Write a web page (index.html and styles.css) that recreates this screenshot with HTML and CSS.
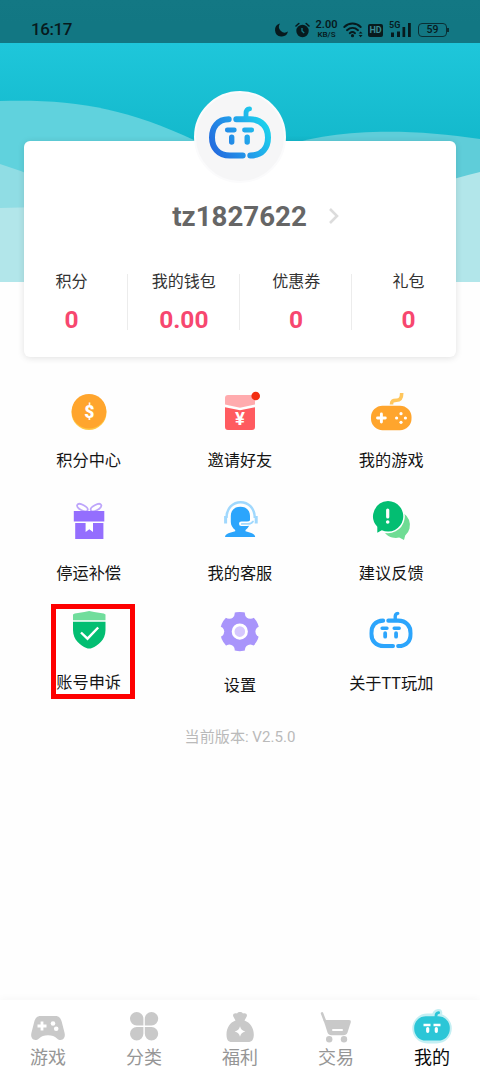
FILE: index.html
```html
<!DOCTYPE html>
<html lang="zh-CN">
<head>
<meta charset="utf-8">
<meta name="viewport" content="width=device-width, initial-scale=1">
<title>我的</title>
<link rel="stylesheet" href="styles.css">
</head>
<body>
<svg class="defs" width="0" height="0">
  <defs>
    <linearGradient id="brand" x1="0" y1="50" x2="62" y2="14" gradientUnits="userSpaceOnUse">
      <stop offset="0" stop-color="#2462dc"/><stop offset=".5" stop-color="#229aea"/><stop offset="1" stop-color="#1bdcec"/>
    </linearGradient>
    <symbol id="logo" viewBox="0 0 62 53">
      <g fill="none" stroke-linecap="round">
        <path stroke-width="6" d="M19.7 13.3C8.5 13.3 3 21.5 3 31.4S9 49.5 21 49.5H33.7M27.3 13.3H41C53 13.3 59 21.5 59 31.4S53.5 49.5 41.3 49.5"/>
        <path stroke-width="4.8" d="M37 12V7.5Q37 3.2 40.6 2.9M18.3 24H25.3M35.5 24H42.7"/>
        <path stroke-width="5.4" d="M22.7 31.2V36M38.2 31.2V36"/>
      </g>
    </symbol>
  </defs>
</svg>
<div class="screen">
  <svg class="waves" width="480" height="282" viewBox="0 0 480 282">
    <defs><linearGradient id="sea" x1="0" y1="0" x2="0" y2="1"><stop offset="0" stop-color="#20c8dc"/><stop offset=".16" stop-color="#1ec6da"/><stop offset=".5" stop-color="#14b9cc"/></linearGradient></defs>
    <path fill="url(#sea)" d="M0 0H480V282H0z"/>
    <path fill="#60d2dd" d="M0 101C75 99 125 108 194 140L300 200V282H0z"/>
    <path fill="#5fcdd9" d="M280 148C330 128 410 128 480 139V282H280z"/>
    <path fill="#90dde4" d="M0 164Q40 176 80 200V282H0z"/>
    <path fill="#b2e6ea" d="M0 208L40 207V282H0zM400 200Q430 184 480 172V282H400z"/>
  </svg>

  <header class="status">
    <span class="time">16:17</span>
    <div class="indicators">
      <svg class="moon" width="15" height="16" viewBox="0 0 15 16"><path fill="#071a1d" d="M6 1.5A6.6 6.6 0 1 0 14 9.6 5.8 5.8 0 0 1 6 1.5z"/></svg>
      <svg width="15" height="16" viewBox="0 0 15 16"><circle cx="7.5" cy="9" r="6.2" fill="#071a1d"/><path fill="none" stroke="#071a1d" stroke-width="1.6" stroke-linecap="round" d="M1 4L3.8 1.5M14 4L11.2 1.5"/><path fill="none" stroke="#117782" stroke-width="1.4" d="M7 6V9L9.2 11"/></svg>
      <div class="speed"><span>2.00</span><small>KB/S</small></div>
      <svg width="20" height="16" viewBox="0 0 20 16"><g fill="none" stroke="#071a1d" stroke-width="1.9" stroke-linecap="round"><path d="M1.3 5C6 .4 13 .4 17.7 5M4 8.2C7.3 5.2 11.7 5.2 15 8.2M6.8 11.2Q9.5 9 12 11.2"/></g><circle cx="9.5" cy="13.7" r="1.6" fill="#071a1d"/><path fill="#071a1d" d="M15.6 11.6L17.6 9.4 19.6 11.6zM15.6 13.1H19.6L17.6 15.3z"/></svg>
      <span class="hd">HD</span>
      <div class="signal"><small>5G</small><svg width="21" height="16" viewBox="0 0 21 16"><path fill="#071a1d" d="M1 10.5H4V15H1zM7 9.5H10V15H7zM12.5 5H15.2V15H12.5zM18 1H20.8V15H18z"/></svg></div>
      <span class="battery">59</span>
    </div>
  </header>

  <section class="profile">
    <div class="avatar"><svg width="62" height="53" stroke="url(#brand)"><use href="#logo"/></svg></div>
    <div class="name"><span>tz1827622</span><svg width="12" height="18" viewBox="0 0 12 18"><path d="M2 2L9 9 2 16" fill="none" stroke="#dcdcdc" stroke-width="2.6"/></svg></div>
    <div class="stats">
      <div class="stat"><span>积分</span><b>0</b></div>
      <div class="stat"><span>我的钱包</span><b>0.00</b></div>
      <div class="stat"><span>优惠券</span><b>0</b></div>
      <div class="stat"><span>礼包</span><b>0</b></div>
    </div>
  </section>

  <main class="menu">
    <div class="item">
      <svg class="icon" viewBox="0 0 56 56"><circle cx="28" cy="28.5" r="17.5" fill="#ffc844"/><circle cx="28" cy="27.3" r="17.3" fill="#ffa52d"/><text class="symbol" x="28.3" y="33.8" font-size="17.5">$</text></svg>
      <span>积分中心</span>
    </div>
    <div class="item">
      <svg class="icon" viewBox="0 0 56 56"><path fill="#ffabae" d="M13 20.5V14Q13 11 16 11H40Q43 11 43 14V20.5L28 23.8z"/><path fill="#ff5b60" d="M13 23.2L28 26.2 43 23.2V43Q43 46 40 46H16Q13 46 13 43z"/><text class="symbol yen" x="28" y="41" font-size="18.5">¥</text><circle cx="43.7" cy="12" r="4.3" fill="#f32c10"/></svg>
      <span>邀请好友</span>
    </div>
    <div class="item">
      <svg class="icon" viewBox="0 0 56 56"><path fill="none" stroke="#ffc65c" stroke-width="3.6" d="M28.5 20.5C28.5 16.5 30 16.3 33.5 16.3S38.7 14.5 38.7 9"/><rect x="8" y="21.7" width="40.5" height="24.5" rx="11.5" fill="#ffa52d"/><path stroke="#fff" stroke-width="2.9" stroke-linecap="round" d="M14.5 34H22.3M18.4 30V38"/><g fill="#fff"><circle cx="33.6" cy="34" r="1.6"/><circle cx="42.4" cy="34" r="1.6"/><circle cx="38" cy="29.7" r="1.6"/><circle cx="38" cy="38.3" r="1.6"/></g></svg>
      <span>我的游戏</span>
    </div>
    <div class="item gap-a">
      <svg class="icon" viewBox="0 0 56 56"><g fill="none" stroke="#bda5fb" stroke-width="1.8"><ellipse cx="21.4" cy="14.6" rx="5.8" ry="2.7" transform="rotate(-28 21.4 14.6) rotate(56 21.4 14.6)"/><ellipse cx="35" cy="14.6" rx="5.8" ry="2.7" transform="rotate(-28 35 14.6)"/></g><path fill="#946efe" d="M12.8 18H43.3V28.6H12.8zM14.2 30H42.4V46H14.2z"/><path fill="#fff" d="M24.6 29.5H32V39L28.3 36.3 24.6 39z"/></svg>
      <span>停运补偿</span>
    </div>
    <div class="item gap-a">
      <svg class="icon" viewBox="0 0 56 56"><path fill="none" stroke="#a0d8fd" stroke-width="2.5" d="M14.5 25C14.5 4 42.8 4 42.8 25"/><path fill="none" stroke="#a0d8fd" stroke-width="3" d="M13.6 23V30.5M44.2 23V30.5"/><path fill="#2ca5fc" d="M28.4 13.7C34.5 13.7 38 17.5 38 23V29C38 32.5 36 35 33.5 37V38.2C38 39.8 43 40 43.2 44H13C13.3 40 18.5 39.8 23.2 38.2V37C20.8 35 18.8 32.5 18.8 29V23C18.8 17.5 22.3 13.7 28.4 13.7z"/><path fill="none" stroke="#fff" stroke-width="4.6" stroke-linecap="round" d="M29.3 30.7H35Q38.5 30.7 40 28.5"/><path fill="none" stroke="#a0d8fd" stroke-width="1.8" stroke-linecap="round" d="M29.8 30.9H36Q39.5 30.9 41 28.5"/></svg>
      <span>我的客服</span>
    </div>
    <div class="item gap-a">
      <svg class="icon" viewBox="0 0 56 56"><path fill="#6fdc94" d="M33 18A14 14 0 0 1 42.2 42.5L41 47 36.2 44.6C30 46 24 43.5 20.5 38z"/><path fill="#03be72" stroke="#fff" stroke-width="3" paint-order="stroke" d="M25 8A15.3 15.3 0 1 1 18.8 37.3L14.3 39.8V33.8A15.3 15.3 0 0 1 25 8z"/><path stroke="#fff" stroke-width="3.2" stroke-linecap="round" d="M24.7 17V24"/><circle cx="24.7" cy="29" r="1.8" fill="#fff"/></svg>
      <span>建议反馈</span>
    </div>
    <div class="item gap-b marked">
      <svg class="icon" viewBox="0 0 56 56"><path fill="#70dd9c" d="M12 10.5Q13 9.4 17 9 24 8 28.2 7 32.5 8 39.5 9 43.5 9.4 44.5 10.5V16.3H12z"/><path fill="#03be72" d="M12 17.8H44.5V26C44.5 36 37 41.5 31 44Q28.2 45.2 25.4 44C19.5 41.5 12 36 12 26z"/><path fill="none" stroke="#fff" stroke-width="2.4" d="M20 28.5L26.5 34.7 37.2 23.5"/></svg>
      <span>账号申诉</span>
    </div>
    <div class="item gap-b low-a">
      <svg class="icon" viewBox="0 0 56 56"><circle cx="27.8" cy="27.6" r="19.6" fill="#a995fb"/><g fill="#fefefe"><circle cx="48.8" cy="27.6" r="5.4"/><circle cx="38.3" cy="9.4" r="5.4"/><circle cx="17.3" cy="9.4" r="5.4"/><circle cx="6.8" cy="27.6" r="5.4"/><circle cx="17.3" cy="45.8" r="5.4"/><circle cx="38.3" cy="45.8" r="5.4"/></g><circle cx="27.8" cy="27.6" r="6.7" fill="#d6c8fe" stroke="#fff" stroke-width="2.8"/></svg>
      <span>设置</span>
    </div>
    <div class="item gap-b low-b">
      <svg class="icon" viewBox="0 0 56 56"><svg x="6.2" y="7.3" width="43.6" height="37.3" stroke="#2ca5fc"><use href="#logo"/></svg></svg>
      <span>关于TT玩加</span>
    </div>
  </main>
  <p class="version">当前版本: V2.5.0</p>

  <nav class="tabs">
    <div class="tab"><svg viewBox="0 0 40 34"><path fill="#c9c9c9" d="M13 6H27C31 6 32.7 8 33.8 12L36.6 23C38 29 33 32 29 28.5 26.5 26 24 25.3 20 25.3S13.5 26 11 28.5C7 32 2 29 3.4 23L6.2 12C7.3 8 9 6 13 6z"/><path stroke="#fff" stroke-width="2.8" d="M9.5 16H18.5M14 11.5V20.5"/><g fill="#fff"><circle cx="25" cy="13.5" r="2.3"/><circle cx="28.2" cy="18.8" r="2.3"/></g></svg><span>游戏</span></div>
    <div class="tab"><svg viewBox="0 0 40 34"><path fill="#c9c9c9" d="M19.4 15.5H12.7A6.7 6.7 0 1 1 19.4 8.8zM20.8 15.5V8.8A6.7 6.7 0 1 1 27.5 15.5zM19.4 17V23.7A6.7 6.7 0 1 1 12.7 17zM20.8 17H27.5A6.7 6.7 0 1 1 20.8 23.7z"/></svg><span>分类</span></div>
    <div class="tab"><svg viewBox="0 0 40 34"><path fill="#c9c9c9" d="M15.5 10.5L13.3 6.5C12.2 3.8 14.8 2.5 17 3.5 18.5 1.6 21.5 1.6 23 3.5 25.2 2.5 27.8 3.8 26.7 6.5L24.5 10.5C30 12.5 33.8 18 33.8 24.5 33.8 29.5 32 32 28 32H12C8 32 6.5 29.5 6.5 24.5 6.5 18 10 12.5 15.5 10.5z"/><path fill="#fff" d="M20 16.3Q21 20.5 25.3 21.5 21 22.5 20 26.7 19 22.5 14.7 21.5 19 20.5 20 16.3z"/></svg><span>福利</span></div>
    <div class="tab"><svg viewBox="0 0 40 34"><path fill="none" stroke="#c9c9c9" stroke-width="2.5" stroke-linecap="round" d="M6 3.3L9 11"/><path fill="#c9c9c9" d="M7.5 10H33Q35.3 10 34.7 12.4L31.5 22.5Q30.5 25.3 27.5 25.3H15.5Q12.5 25.3 11.5 22.5z"/><path stroke="#fff" stroke-width="2" stroke-linecap="round" d="M17 20H26"/><g fill="#c9c9c9"><circle cx="13.2" cy="29.3" r="3.2"/><circle cx="28" cy="29.3" r="3.2"/></g></svg><span>交易</span></div>
    <div class="tab active"><svg viewBox="0 0 40 34"><g fill="none" stroke="#c4eff3" stroke-linecap="round"><path stroke-width="7.5" d="M24 7Q23.5 3.2 26.5 2.7"/><rect x="3.3" y="6.5" width="33.5" height="24" rx="12" stroke-width="6"/></g><rect x="2.2" y="6.3" width="35.6" height="24.3" rx="11.5" fill="#2bc6d7"/><path fill="none" stroke="#2bc6d7" stroke-width="2.8" stroke-linecap="round" d="M24 8V6Q24 3 26.6 2.7"/><path stroke="#fff" stroke-width="2.6" d="M11.5 15H18.5M21.5 15H28.5"/><path stroke="#fff" stroke-width="3.2" stroke-linecap="round" d="M15.7 18.5V21.3M24.3 18.5V21.3"/></svg><span>我的</span></div>
  </nav>
</div>
</body>
</html>
```
FILE: styles.css
```css
*, *::before, *::after { box-sizing: border-box; }
body { margin: 0; background: #fefefe; font-family: Roboto, "Noto Sans CJK SC", sans-serif; color: #141414; }
.defs { position: absolute; }
.screen { position: relative; display: flex; flex-direction: column; width: 480px; height: 1073px; overflow: hidden; }
.waves { position: absolute; top: 0; left: 0; }
.status { position: relative; display: flex; justify-content: space-between; height: 43px; padding: 15px 33px 0 31px; background: rgba(0, 0, 0, .4); color: #071a1d; }
.time { font-size: 17px; font-weight: 500; line-height: 29px; letter-spacing: -.4px; }
.indicators { display: flex; align-items: center; height: 29px; gap: 5px; }
.moon { margin-right: 1px; }
.speed { display: flex; flex-direction: column; align-items: center; width: 23px; font-weight: 600; }
.speed span { font-size: 11px; line-height: 10px; }
.speed small { font-size: 8px; line-height: 10px; }
.hd { width: 15px; height: 13px; margin: 1px 2px 0 0; border-radius: 2px; background: #071a1d; color: #3b8b94; font-size: 9px; font-weight: 700; line-height: 13px; text-align: center; }
.signal { position: relative; display: flex; margin-right: 2px; }
.signal small { position: absolute; top: -1px; left: -1px; font-size: 9px; line-height: 9px; font-weight: 600; }
.battery { position: relative; width: 29px; height: 14px; border: 1.5px solid #0a2f34; border-radius: 4px; font-size: 10.5px; font-weight: 500; line-height: 12px; text-align: center; }
.battery::after { content: ""; position: absolute; right: -3px; top: 4px; width: 2px; height: 4px; background: #0a2f34; }

.profile { position: relative; display: flex; flex-direction: column; align-items: center; height: 216px; margin: 98px 24px 0; border-radius: 6px; background: #fff; box-shadow: 0 1px 7px rgba(0, 0, 0, .12); }
.avatar { display: flex; justify-content: center; width: 92px; height: 92px; margin-top: -50px; padding-top: 13px; border: 2px solid #fbfbfc; border-radius: 50%; background: #f6f6f7; }
.name { display: flex; align-items: center; gap: 21px; height: 34px; margin: 16px 0 0 32px; color: #666; font-size: 27.7px; font-weight: 700; }
.name span { padding-top: 1px; }
.stats { display: grid; grid-template-columns: repeat(4, 112.3px); margin-top: 41px; }
.stat { display: flex; flex-direction: column; align-items: center; gap: 12px; height: 56px; }
.stat + .stat { box-shadow: -1px 0 #ececec; }
.stat span { color: #333; font-size: 16px; line-height: 16px; }
.stat b { color: #f7476f; font-size: 24.5px; line-height: 35px; }

.menu { display: grid; grid-template-columns: repeat(3, 151.3px); padding: 27px 13px 0; }
.item { position: relative; display: flex; flex-direction: column; align-items: center; gap: 9px; font-size: 16.2px; line-height: 24px; }
.icon { width: 56px; height: 56px; }
.gap-a { gap: 13px; padding-top: 20px; }
.gap-b { gap: 11px; padding-top: 18px; }
.low-a { gap: 14px; }
.low-b { gap: 12px; }
.symbol { fill: #fff; font-weight: 900; text-anchor: middle; }
.yen { font-weight: 700; }
.marked::after { content: ""; position: absolute; top: 18px; left: 38px; width: 84px; height: 95px; border: 5px solid #fe0000; }
.version { margin: 27px 0 0; color: #bababa; font-size: 15.1px; line-height: 24px; text-align: center; }

.tabs { display: grid; grid-template-columns: repeat(5, 1fr); height: 73px; margin-top: auto; background: #fff; box-shadow: 0 -1px 8px rgba(0, 0, 0, .035); }
.tab { display: flex; flex-direction: column; align-items: center; gap: 1px; padding-top: 10px; color: #969696; font-size: 18px; line-height: 26px; }
.tab svg { width: 40px; height: 34px; overflow: visible; }
.active { color: #0a0a0a; }
```
